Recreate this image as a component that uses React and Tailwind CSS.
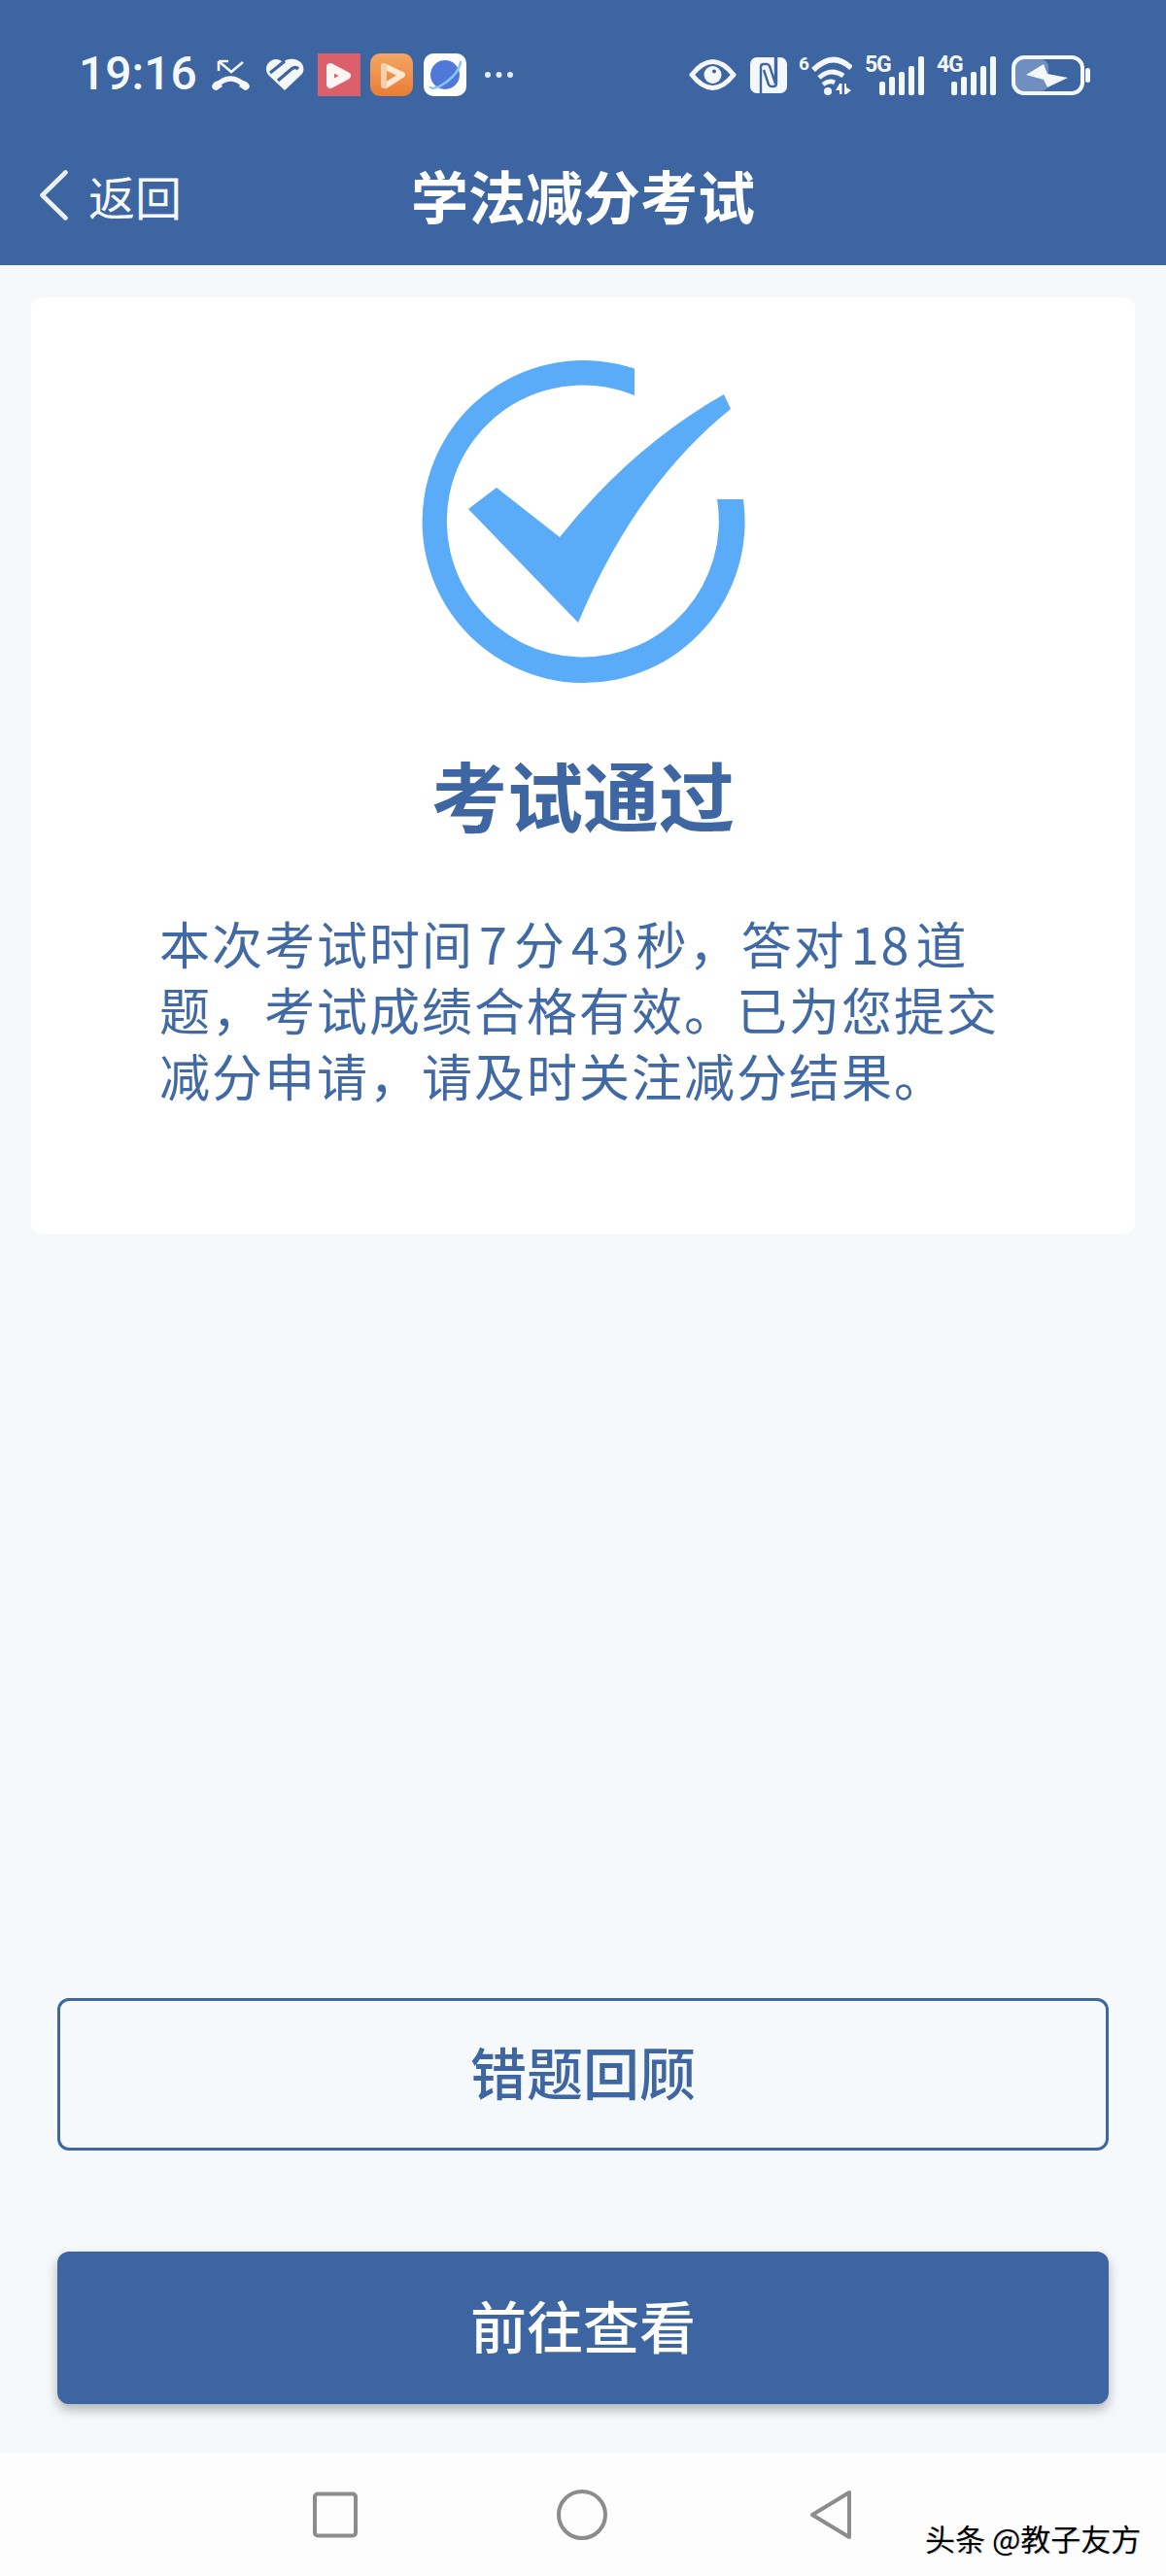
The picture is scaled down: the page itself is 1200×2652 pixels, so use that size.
const cjk = { fontFamily: '"Noto Sans CJK SC", "Noto Sans", sans-serif' };

function MissedCall() {
  return (
    <svg width="41" height="33" viewBox="0 0 41 33" className="ml-[16px]">
      <path d="M8 2h10M8 2v10M8 2l13 11L33 3" fill="none" stroke="#f4f7fb" strokeWidth="2.6" />
      <path d="M5 28Q20 12 36 28" fill="none" stroke="#f4f7fb" strokeWidth="5.5" />
      <path d="M1 28q1-5 7-6l4 6-6 4q-4 0-5-4zM40 28q-1-5-7-6l-4 6 6 4q4 0 5-4z" fill="#f4f7fb" />
    </svg>
  );
}

function HeartIcon() {
  return (
    <svg width="40" height="34" viewBox="0 0 40 34" className="ml-[15px]">
      <path d="M20 33L3 17C-2 10 3 2 10 1c4 0 6 1 8 3 3-3 8-4 12-3 7 1 12 8 8 15z" fill="#f4f7fb" />
      <path d="M5 15L20 3M13 23L27 11q4-3 7 0" fill="none" stroke="#3c65a2" strokeWidth="3.4" />
    </svg>
  );
}

function RedPlay() {
  return (
    <svg width="44" height="44" viewBox="0 0 44 44" className="ml-[14px]">
      <rect width="44" height="44" fill="#dc5f6c" />
      <path d="M13 14L30 23L13 32Z" fill="#dc5f6c" stroke="#fdf4f4" strokeWidth="8" strokeLinejoin="round" />
    </svg>
  );
}

function OrangePlay() {
  return (
    <svg width="44" height="44" viewBox="0 0 44 44" className="ml-[10px]">
      <defs>
        <linearGradient id="og" x1="0" y1="0" x2="0" y2="1">
          <stop offset="0" stopColor="#f3a664" />
          <stop offset="1" stopColor="#ea7d34" />
        </linearGradient>
      </defs>
      <rect width="44" height="44" rx="10" fill="url(#og)" />
      <path d="M14 13L33 22L16 33" fill="none" stroke="#fde8d4" strokeWidth="6" strokeLinejoin="round" strokeLinecap="round" />
      <path d="M14 13V33" fill="none" stroke="#f8cfa8" strokeWidth="6" strokeLinecap="round" />
    </svg>
  );
}

function PlanetIcon() {
  return (
    <svg width="44" height="44" viewBox="0 0 44 44" className="ml-[11px]">
      <rect width="44" height="44" rx="10" fill="#fdfdfe" />
      <circle cx="22" cy="22" r="15" fill="#4f78d8" />
      <path d="M7 35Q12 38 24 29T38 9" fill="none" stroke="#8ac6f2" strokeWidth="2.6" strokeLinecap="round" />
    </svg>
  );
}

function DotsIcon() {
  return (
    <svg width="31" height="8" viewBox="0 0 31 8" className="ml-[18px]">
      <circle cx="4" cy="4" r="3" fill="#e8eef6" />
      <circle cx="15.5" cy="4" r="3" fill="#e8eef6" />
      <circle cx="27" cy="4" r="3" fill="#e8eef6" />
    </svg>
  );
}

function EyeIcon() {
  return (
    <svg width="49" height="32" viewBox="0 0 49 32">
      <path d="M3 16Q24.5-11 46 16Q24.5 43 3 16Z" fill="none" stroke="#f4f7fb" strokeWidth="5" strokeLinejoin="round" />
      <circle cx="24.5" cy="16" r="9" fill="#f4f7fb" />
      <circle cx="26" cy="12.5" r="2" fill="#3c65a2" />
    </svg>
  );
}

function NfcIcon() {
  return (
    <svg width="38" height="37" viewBox="0 0 38 37" className="ml-[14px]">
      <rect width="38" height="37" rx="7" fill="#f4f7fb" />
      <path d="M11 37V10q0-3 3-3h3q2 0 3 2l6 18V0" fill="none" stroke="#3c65a2" strokeWidth="2.4" />
      <path d="M27 0v27q0 3-3 3h-2q-2 0-3-2l-5-15" fill="none" stroke="#3c65a2" strokeWidth="2.4" />
    </svg>
  );
}

function WifiIcon() {
  return (
    <div className="relative w-[55px] h-[42px] ml-[12px]">
      <span className="absolute left-0 top-0 text-[19px] leading-[19px] font-bold text-[#f4f7fb] font-['Roboto',sans-serif]">6</span>
      <svg width="55" height="42" viewBox="0 0 55 42" className="block">
        <path d="M15 16Q35-4 54 14" fill="none" stroke="#f4f7fb" strokeWidth="5.5" />
        <path d="M21 24Q33 13 46 22" fill="none" stroke="#f4f7fb" strokeWidth="5" />
        <path d="M25 31Q31 26 37 29" fill="none" stroke="#f4f7fb" strokeWidth="4.5" />
        <circle cx="30" cy="38" r="4" fill="#f4f7fb" />
        <path d="M42 30h2.5v11H42v-4h-4zM47 30h2v4l5 3-5 4h-2z" fill="#f4f7fb" />
      </svg>
    </div>
  );
}

function SignalIcon({ label, className }) {
  return (
    <div className={`relative w-[61px] h-[41px] ${className}`}>
      <span className="absolute left-0 top-0 text-[23px] leading-[20px] font-bold tracking-[-1.2px] text-[#f4f7fb] font-['Roboto',sans-serif]">{label}</span>
      <svg width="61" height="41" viewBox="0 0 61 41" className="block">
        <rect x="15" y="27" width="6" height="14" rx="2" fill="#f4f7fb" />
        <rect x="25" y="22" width="6" height="19" rx="2" fill="#f4f7fb" />
        <rect x="35" y="17" width="6" height="24" rx="2" fill="#f4f7fb" />
        <rect x="45" y="11" width="6" height="30" rx="2" fill="#f4f7fb" />
        <rect x="55" y="1" width="6" height="40" rx="2" fill="#f4f7fb" />
      </svg>
    </div>
  );
}

function BatteryIcon() {
  return (
    <svg width="81" height="41" viewBox="0 0 81 41" className="ml-[16px]">
      <rect x="4" y="4" width="34" height="33" rx="8" fill="#6e8fc0" />
      <rect x="2" y="2" width="71" height="37" rx="11" fill="none" stroke="#f4f7fb" strokeWidth="4" />
      <path d="M15 20L33 9L37 19L58 23L37 33L33 25Z" fill="#f4f7fb" />
      <rect x="76" y="13" width="5" height="15" rx="2.5" fill="#f4f7fb" />
    </svg>
  );
}

function PassedMark() {
  return (
    <svg width="440" height="400" viewBox="0 0 440 400" className="block">
      <path d="M273 39.5A166 166 0 1 0 385 174L358 174A140 140 0 1 1 273 67Z" fill="#5aabf8" />
      <path d="M102 184L131 162L196 213Q270 120 365 66L372 81Q274 160 215 301Z" fill="#5aabf8" />
    </svg>
  );
}

export default function App() {
  return (
    <div className="w-[1200px] h-[2652px] flex flex-col bg-[#f5f9fb]" style={cjk}>
      {/* header + status bar */}
      <div className="h-[273px] shrink-0 bg-[#3c65a2] text-white pt-[55px]">
        <div className="h-[44px] flex items-center justify-between pl-[83px] pr-[78px]">
          <div className="flex items-center">
            <span className="w-[118px] text-[48px] leading-none font-medium text-[#f4f7fb] font-['Roboto',sans-serif] relative -top-[1px] -left-[2px] whitespace-nowrap">19:16</span>
            <MissedCall />
            <HeartIcon />
            <RedPlay />
            <OrangePlay />
            <PlanetIcon />
            <DotsIcon />
          </div>
          <div className="flex items-center">
            <EyeIcon />
            <NfcIcon />
            <WifiIcon />
            <SignalIcon label="5G" className="ml-[13px]" />
            <SignalIcon label="4G" className="ml-[13px]" />
            <BatteryIcon />
          </div>
        </div>
        <div className="mt-[32px] h-[139px] flex items-center relative">
          <div className="flex items-center pl-[40px]">
            <svg width="30" height="52" viewBox="0 0 30 52">
              <path d="M27.5 2.5L3.5 26L27.5 49.5" fill="none" stroke="#eef2f8" strokeWidth="4.6" strokeLinecap="round" strokeLinejoin="round" />
            </svg>
            <span className="ml-[21px] text-[48px] leading-none text-[#f4f7fb]">返回</span>
          </div>
          <div className="absolute inset-x-0 text-center text-[59px] leading-none font-bold">学法减分考试</div>
        </div>
      </div>

      {/* result card */}
      <div className="flex-1 flex flex-col px-[32px] pt-[33px]">
        <div className="h-[965px] bg-white rounded-[12px] flex flex-col items-center">
          <div className="mt-[34px]">
            <PassedMark />
          </div>
          <h1 className="mt-[32px] text-[78px] leading-[90px] font-bold text-[#3d66a3]">考试通过</h1>
          <p className="mt-[75px] self-start ml-[132px] text-[52px] leading-[68px] tracking-[2px] text-[#4069a6] whitespace-nowrap">
            本次考试时间<span className="mx-[5px]">7</span>分<span className="mx-[5px]">43</span>秒，答对<span className="mx-[5px]">18</span>道
            <br />
            题，考试成绩合格有效。已为您提交
            <br />
            减分申请，请及时关注减分结果。
          </p>
        </div>

        <div className="mt-auto px-[27px] pb-[50px] flex flex-col gap-[104px]">
          <button className="h-[157px] pb-[6px] border-[3px] border-[#3d66a3] rounded-[12px] text-[58px] font-medium text-[#3d66a3]">错题回顾</button>
          <button className="h-[157px] pb-[6px] bg-[#3c65a2] rounded-[12px] text-[58px] font-medium text-white shadow-[0_6px_12px_rgba(0,0,0,0.28)]">前往查看</button>
        </div>
      </div>

      {/* android nav bar */}
      <div className="h-[127px] shrink-0 bg-[#fdfdfd] relative flex items-start pt-[38px] pl-[322px]">
        <svg width="46" height="48" viewBox="0 0 46 48" className="mt-[2px]">
          <rect x="2" y="2.5" width="42" height="43" rx="3" fill="none" stroke="#8c8c8c" strokeWidth="4" />
        </svg>
        <svg width="52" height="52" viewBox="0 0 52 52" className="ml-[205px]">
          <circle cx="26" cy="26" r="24" fill="none" stroke="#8c8c8c" strokeWidth="4" />
        </svg>
        <svg width="44" height="52" viewBox="0 0 44 52" className="ml-[208px]">
          <path d="M41 3V49L3 26Z" fill="none" stroke="#8c8c8c" strokeWidth="4" strokeLinejoin="round" />
        </svg>
        <span className="absolute left-[952px] top-[70px] text-[31px] leading-[36px] text-black whitespace-nowrap [text-shadow:1px_1px_0_#d8d8d8]">头条 @教子友方</span>
      </div>
    </div>
  );
}
